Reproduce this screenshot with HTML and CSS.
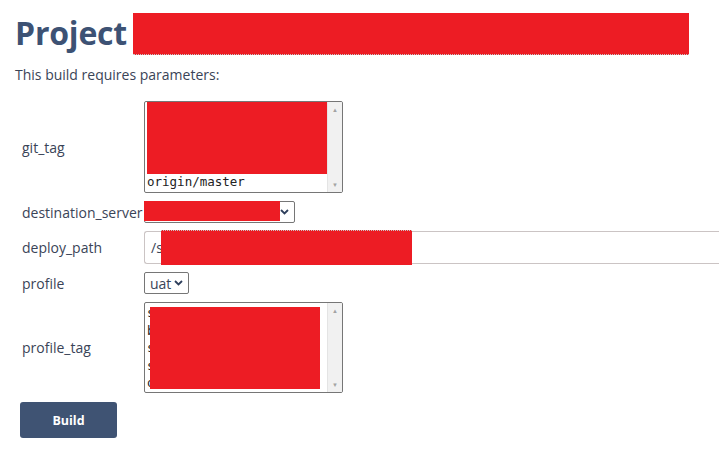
FILE: index.html
```html
<!DOCTYPE html>
<html>
<head>
<meta charset="utf-8">
<link rel="stylesheet" href="styles.css">
</head>
<body>
<div class="page">
  <h1 class="title"><span class="title-text">Project</span><span class="redact title-redact"></span></h1>
  <p class="intro">This build requires parameters:</p>
  <div class="params">
    <div class="label">git_tag</div>
    <div class="control">
      <div class="listbox list-git">
        <div class="list-lines">
          <div class="line">&nbsp;</div>
          <div class="line">&nbsp;</div>
          <div class="line">&nbsp;</div>
          <div class="line">&nbsp;</div>
          <div class="line">origin/master</div>
        </div>
        <div class="scrollbar"><span class="arrow">&#9650;</span><span class="arrow">&#9660;</span></div>
        <span class="redact git-redact"></span>
      </div>
    </div>

    <div class="label">destination_server</div>
    <div class="control">
      <div class="select select-dest">
        <span class="select-value"></span>
        <svg class="chev" width="9" height="6" viewBox="0 0 9 6"><path d="M1 1l3.5 3.5L8 1" fill="none" stroke="#2e3f5c" stroke-width="1.8"/></svg>
        <span class="redact dest-redact"></span>
      </div>
    </div>

    <div class="label">deploy_path</div>
    <div class="control">
      <div class="textinput">/s<span class="redact path-redact"></span></div>
    </div>

    <div class="label">profile</div>
    <div class="control">
      <div class="select select-profile">
        <span class="select-value">uat</span>
        <svg class="chev" width="9" height="6" viewBox="0 0 9 6"><path d="M1 1l3.5 3.5L8 1" fill="none" stroke="#2e3f5c" stroke-width="1.8"/></svg>
      </div>
    </div>

    <div class="label">profile_tag</div>
    <div class="control">
      <div class="listbox list-profile">
        <div class="list-lines">
          <div class="line">s</div>
          <div class="line">b</div>
          <div class="line">s</div>
          <div class="line">s</div>
          <div class="line">o</div>
        </div>
        <div class="scrollbar"><span class="arrow">&#9650;</span><span class="arrow">&#9660;</span></div>
        <span class="redact profile-redact"></span>
      </div>
    </div>
  </div>
  <button class="build-btn">Build</button>
</div>
</body>
</html>
```

FILE: styles.css
```css
* { box-sizing: border-box; }
html, body { margin: 0; padding: 0; background: #fff; }
body {
  font-family: "Open Sans", "Noto Sans", sans-serif;
  color: #3a4457;
}
.page {
  padding: 12px 0 0 15px;
}
.title {
  margin: 0;
  display: flex;
  align-items: flex-start;
  font-size: 32px;
  font-weight: 700;
  line-height: 42px;
  color: #3d5274;
  letter-spacing: -0.2px;
}
.redact { background: #ed1c24; display: block; }
.title-redact {
  margin-left: 6px;
  margin-top: 1px;
  width: 556px;
  height: 42px;
  border-bottom: 1px dotted #c8c8c8;
}
.intro {
  margin: 10px 0 0 0;
  font-size: 14px;
  line-height: 19px;
  color: #3a4457;
}
.params {
  margin: 17px 0 0 7px;
  display: grid;
  grid-template-columns: 122px 1fr;
  row-gap: 8px;
  align-items: center;
}
.label {
  font-size: 14px;
  color: #3a4457;
  white-space: nowrap;
}
.control { display: flex; align-items: center; }
.listbox {
  position: relative;
  width: 199px;
  border: 1px solid #767676;
  border-radius: 2px;
  display: flex;
  background: #fff;
  overflow: hidden;
}
.list-git { height: 92px; }
.list-profile { height: 91px; }
.list-lines {
  flex: 1;
  padding: 1px 0 0 2px;
  font-family: "DejaVu Sans Mono", "Liberation Mono", monospace;
  font-size: 12.5px;
  line-height: 17.5px;
  color: #222;
  overflow: hidden;
}
.scrollbar {
  width: 15px;
  background: #f1f1f1;
  border-left: 1px solid #e4e4e4;
  display: flex;
  flex-direction: column;
  justify-content: space-between;
  align-items: center;
  padding: 4px 0 3px;
}
.arrow { font-size: 6px; color: #a3a3a3; line-height: 8px; }
.git-redact {
  position: absolute;
  left: 2px; top: 0;
  width: 180px; height: 72px;
}
.profile-redact {
  position: absolute;
  left: 5px; top: 4px;
  width: 170px; height: 82px;
}
.select {
  position: relative;
  height: 22px;
  border: 1px solid #767676;
  border-radius: 2px;
  display: flex;
  align-items: center;
  padding: 0 5px;
  font-size: 14px;
  color: #3a4457;
}
.select-dest { width: 151px; justify-content: flex-end; }
.select-profile { width: 45px; justify-content: space-between; }
.chev { display: block; }
.dest-redact {
  position: absolute;
  left: -1px; top: -1px;
  width: 136px; height: 20px;
}
.textinput {
  position: relative;
  width: 580px;
  height: 33px;
  border: 1px solid #cbc4c4;
  border-right: none;
  border-radius: 3px 0 0 3px;
  padding: 0 6px;
  display: flex;
  align-items: center;
  font-size: 14px;
  color: #3a4457;
}
.path-redact {
  position: absolute;
  left: 16px; top: -2px;
  width: 251px; height: 35px;
  border-top: 1px dotted #c8c8c8;
}
.build-btn {
  margin: 9px 0 0 5px;
  width: 97px;
  height: 36px;
  border: none;
  border-radius: 3px;
  background: #3f5373;
  color: #fff;
  font-family: "Open Sans", "Noto Sans", sans-serif;
  font-weight: 700;
  font-size: 12.5px;
  cursor: pointer;
}
```
